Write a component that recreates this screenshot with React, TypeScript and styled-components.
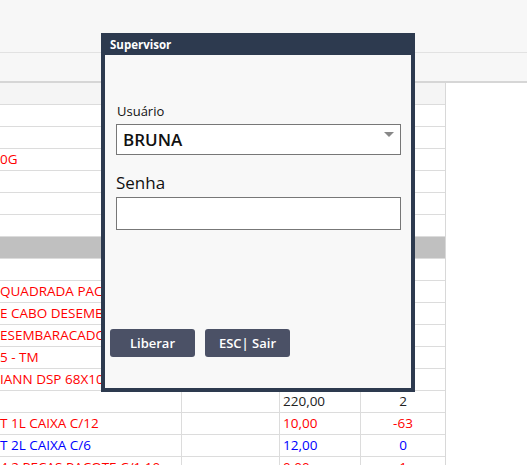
import { createGlobalStyle, styled } from "styled-components";

const Global = createGlobalStyle`
  html, body { margin: 0; padding: 0; background: #fff; }
  body { font-family: "Open Sans", "Noto Sans", sans-serif; width: 527px; height: 465px; overflow: hidden; }
`;

const Page = styled.div`
  position: relative;
  width: 527px;
  height: 465px;
  overflow: hidden;
`;

const TopBar = styled.div`
  height: 52px;
  background: #f7f7f7;
  border-bottom: 1px solid #e2e2e2;
`;

const SubBar = styled.div`
  height: 28px;
  background: #f7f7f7;
  border-bottom: 2px solid #d6d6d6;
`;

const Table = styled.div`
  width: 445px;
  border-right: 1px solid #d8d8d8;
`;

const Row = styled.div<{ $bg?: string }>`
  display: grid;
  grid-template-columns: 181px 98px 81px 85px;
  height: 21px;
  border-bottom: 1px solid #dcdcdc;
  background: ${({ $bg }) => $bg || "#fff"};
`;

const Cell = styled.div<{ $color?: string; $align?: string }>`
  font-size: 13.5px;
  line-height: 21px;
  color: ${({ $color }) => $color || "#222"};
  text-align: ${({ $align }) => $align || "left"};
  white-space: nowrap;
  overflow: hidden;
  padding: 0 3px;
  &:first-child { padding-left: 0; }
  & + & { border-left: 1px solid #dcdcdc; }
`;

const Dialog = styled.div`
  position: absolute;
  left: 101px;
  top: 33px;
  width: 314px;
  height: 359px;
  box-sizing: border-box;
  background: #2d3a4f;
  display: flex;
  flex-direction: column;
  padding: 0 4px 4px;
`;

const DialogTitle = styled.div`
  height: 22px;
  line-height: 24px;
  color: #fff;
  font-size: 11.5px;
  font-weight: 700;
  padding-left: 5px;
`;

const DialogBody = styled.div`
  flex: 1;
  background: #f8f8f8;
  padding: 47px 10px 0 11px;
  display: flex;
  flex-direction: column;
`;

const Label = styled.div<{ $big?: boolean }>`
  font-size: ${({ $big }) => ($big ? "17px" : "13px")};
  color: #111;
  margin-left: ${({ $big }) => ($big ? "0" : "1px")};
  margin-bottom: ${({ $big }) => ($big ? "3px" : "4px")};
`;

const Select = styled.div`
  height: 29px;
  border: 1px solid #777;
  background: #fff;
  display: flex;
  align-items: center;
  justify-content: space-between;
  padding: 0 6px;
  font-size: 17px;
  font-weight: 600;
  color: #111;
  margin-bottom: 16px;
`;

const Caret = styled.span`
  width: 0;
  height: 0;
  border-left: 5px solid transparent;
  border-right: 5px solid transparent;
  border-top: 5px solid #888;
  align-self: flex-start;
  margin-top: 7px;
`;

const Input = styled.div`
  height: 31px;
  border: 1px solid #777;
  background: #fff;
`;

const Buttons = styled.div`
  display: flex;
  gap: 10px;
  margin-top: 99px;
  margin-left: -6px;
`;

const Button = styled.div`
  width: 85px;
  height: 28px;
  border-radius: 3px;
  background: #4b5166;
  color: #fff;
  font-size: 13px;
  font-weight: 600;
  display: flex;
  align-items: center;
  justify-content: center;
`;

const RED = "#f00";
const BLUE = "#00f";

const rows: [string, string, string, string?][] = [
  ["", "", "", "head"],
  ["", "", ""],
  ["", "", ""],
  ["0G", "", "", RED],
  ["", "", ""],
  ["", "", ""],
  ["", "", ""],
  ["", "", "", "band"],
  ["", "", ""],
  ["QUADRADA PACOTE", "", "", RED],
  ["E CABO DESEMBARACADOR", "", "", RED],
  ["ESEMBARACADOR", "", "", RED],
  ["5 - TM", "", "", RED],
  ["IANN DSP 68X100", "", "", RED],
  ["", "220,00", "2"],
  ["T 1L CAIXA C/12", "10,00", "-63", RED],
  ["T 2L CAIXA C/6", "12,00", "0", BLUE],
  ["4 2 PECAS PACOTE C/1 10", "0,00", "1", RED],
];

export default function App() {
  return (
    <Page>
      <Global />
      <TopBar />
      <SubBar />
      <Table>
        {rows.map(([a, b, c, col], i) => {
          const bg = col === "band" ? "#c0c0c0" : col === "head" ? "#f5f5f5" : undefined;
          const color = col === RED || col === BLUE ? col : undefined;
          return (
            <Row key={i} $bg={bg}>
              <Cell $color={color}>{a}</Cell>
              <Cell />
              <Cell $color={color}>{b}</Cell>
              <Cell $color={color} $align="center">{c}</Cell>
            </Row>
          );
        })}
      </Table>
      <Dialog>
        <DialogTitle>Supervisor</DialogTitle>
        <DialogBody>
          <Label>Usuário</Label>
          <Select>
            BRUNA
            <Caret />
          </Select>
          <Label $big>Senha</Label>
          <Input />
          <Buttons>
            <Button>Liberar</Button>
            <Button>ESC| Sair</Button>
          </Buttons>
        </DialogBody>
      </Dialog>
    </Page>
  );
}
